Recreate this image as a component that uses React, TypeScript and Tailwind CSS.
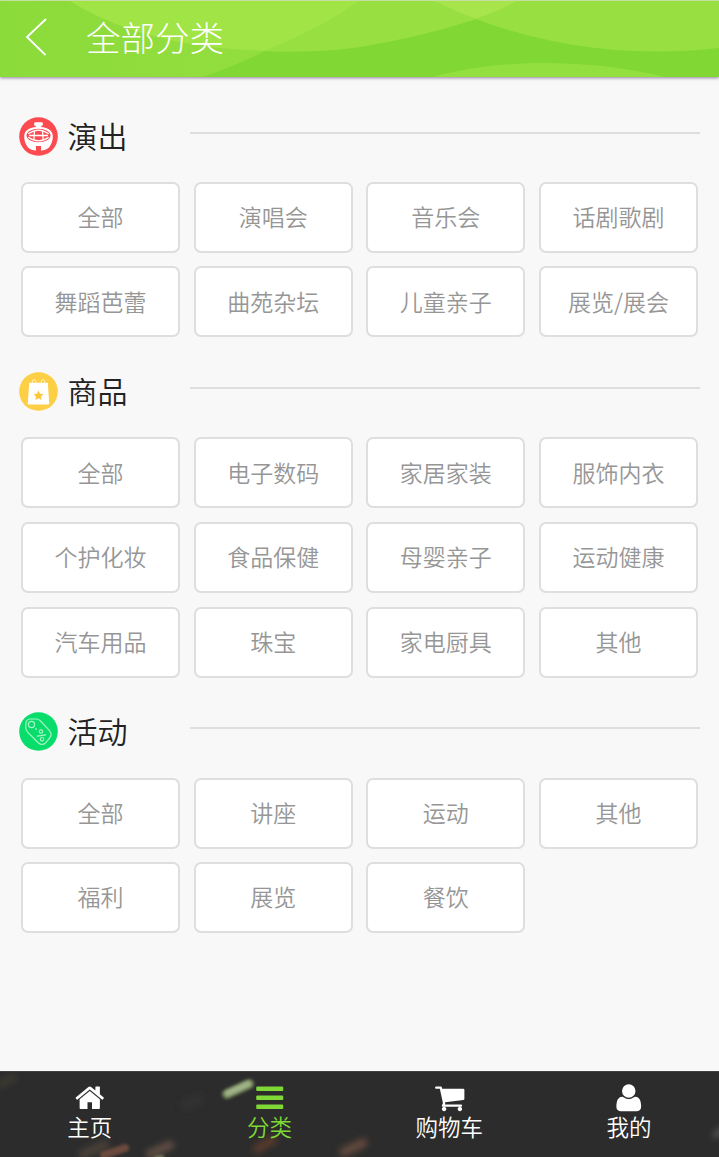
import type { ReactNode } from 'react';

// ============================================================
// Category Page: all categories with bottom tab bar
// ============================================================

interface Section {
  title: string;
  icon: ReactNode;
  items: string[];
}

function ShowIcon() {
  return (
    <svg viewBox="0 0 39 39" className="w-[39px] h-[39px] shrink-0">
      <circle cx="19.5" cy="19.5" r="19.3" fill="#fb4b50" />
      <path d="M15.200 6.200q0-1 1-1h6.600q1 0 1 1v1.800q0 .8-.8.8h-.8v3h-5.400v-3h-.8q-.8 0-.8-.8z" fill="#fff" />
      <path
        d="M19.500 9.800c8.500 0 14 3.700 14.300 9 .2 4.700-1.400 8.700-3.800 11.700-2.200 2-5 2.800-8 3.200v-4.700h-5v4.700c-3-.4-5.800-1.200-8-3.200-2.400-3-4-7-3.800-11.700.3-5.300 5.800-9 14.300-9z"
        fill="#fff"
      />
      <ellipse cx="19.500" cy="18.500" rx="12" ry="6.700" fill="#fb4b50" />
      <path
        d="M9.300 16.800Q19.500 9.500 29.700 16.800M9.300 20.200Q19.500 27.500 29.700 20.200M10 18.500h19M15.500 13.500l-.7 10M23.500 13.500l.7 10"
        fill="none"
        stroke="#fff"
        strokeWidth="1.300"
      />
    </svg>
  );
}

function GoodsIcon() {
  return (
    <svg viewBox="0 0 39 39" className="w-[39px] h-[39px] shrink-0">
      <circle cx="19.5" cy="19.5" r="19.3" fill="#fdcf45" />
      <path
        d="M13.500 11.500v-2q0-2 1.600-2t1.600 2v2M22.300 11.500v-2q0-2 1.600-2t1.600 2v2"
        fill="none"
        stroke="#fff"
        strokeOpacity=".75"
        strokeWidth=".9"
      />
      <path d="M10.200 10.700h18.600l1.400 20.700q.1 1.100-1 1.100H9.800q-1.100 0-1-1.100z" fill="#fff" />
      <path
        d="M19.500 18.500l1.500 3.200 3.500.4-2.600 2.400.7 3.500-3.100-1.800-3.100 1.800.7-3.500-2.600-2.400 3.500-.4z"
        fill="#fbc63a"
      />
    </svg>
  );
}

function ActivityIcon() {
  return (
    <svg viewBox="0 0 39 39" className="w-[39px] h-[39px] shrink-0">
      <circle cx="19.5" cy="19.5" r="19.3" fill="#08dd6c" />
      <g fill="none" stroke="#a6f5c7" strokeWidth="1.200" strokeLinecap="round">
        <path d="M11 7h6.500q2.300.2 4 2L30.500 18.700q2.700 3.500.6 6.700l-4.300 5.300q-3.600 3.300-7.300.3L8.600 20.200q-1.600-1.900-1.800-4.200v-4.500Q7.200 7.300 11 7z" />
        <circle cx="12.500" cy="12.500" r="3.100" />
        <path d="M16.500 16.500l.9.900M18.300 24.200l8.400-1.400" />
        <circle cx="22" cy="19.500" r="1.700" />
        <circle cx="23" cy="27.200" r="1.700" />
      </g>
    </svg>
  );
}

const sections: Section[] = [
  {
    title: '演出',
    icon: <ShowIcon />,
    items: ['全部', '演唱会', '音乐会', '话剧歌剧', '舞蹈芭蕾', '曲苑杂坛', '儿童亲子', '展览/展会'],
  },
  {
    title: '商品',
    icon: <GoodsIcon />,
    items: [
      '全部', '电子数码', '家居家装', '服饰内衣',
      '个护化妆', '食品保健', '母婴亲子', '运动健康',
      '汽车用品', '珠宝', '家电厨具', '其他',
    ],
  },
  {
    title: '活动',
    icon: <ActivityIcon />,
    items: ['全部', '讲座', '运动', '其他', '福利', '展览', '餐饮'],
  },
];

const tabs = [
  {
    label: '主页',
    path: 'M1472 992v480q0 26-19 45t-45 19h-384v-384h-256v384h-384q-26 0-45-19t-19-45v-480q0-1 .5-3t.5-3l575-474 575 474q1 2 1 6zm223-69l-62 74q-8 9-21 11h-3q-13 0-21-7l-692-577-692 577q-12 8-24 7-13-2-21-11l-62-74q-8-10-7-23.5t11-21.5l719-599q32-26 76-26t76 26l244 204v-195q0-14 9-23t23-9h192q14 0 23 9t9 23v408l219 182q10 8 11 21.5t-7 23.5z',
  },
  {
    label: '分类',
    active: true,
    path: 'M1664 1344v128q0 26-19 45t-45 19h-1408q-26 0-45-19t-19-45v-128q0-26 19-45t45-19h1408q26 0 45 19t19 45zm0-512v128q0 26-19 45t-45 19h-1408q-26 0-45-19t-19-45v-128q0-26 19-45t45-19h1408q26 0 45 19t19 45zm0-512v128q0 26-19 45t-45 19h-1408q-26 0-45-19t-19-45v-128q0-26 19-45t45-19h1408q26 0 45 19t19 45z',
  },
  {
    label: '购物车',
    path: 'M704 1536q0 52-38 90t-90 38-90-38-38-90 38-90 90-38 90 38 38 90zm896 0q0 52-38 90t-90 38-90-38-38-90 38-90 90-38 90 38 38 90zm128-1088v512q0 24-16.5 42.5t-40.5 21.5l-1044 122q13 60 13 70 0 16-24 64h920q26 0 45 19t19 45-19 45-45 19h-1024q-26 0-45-19t-19-45q0-11 8-31.500t16-36 21.500-40 15.500-29.500l-177-823h-204q-26 0-45-19t-19-45 19-45 45-19h256q16 0 28.500 6.500t19.500 15.500 13 24.500 8 26 5.500 29.500 4.500 26h1201q26 0 45 19t19 45z',
  },
  {
    label: '我的',
    path: 'M1600 1405q0 120-73 189.500t-194 69.500h-874q-121 0-194-69.500t-73-189.500q0-53 3.500-103.500t14-109 26.500-108.500 43-97.500 62-81 85.500-53.500 111.500-20q9 0 42 21.500t74.500 48 108 48 133.500 21.500 133.500-21.500 108-48 74.500-48 42-21.500q61 0 111.500 20t85.500 53.500 62 81 43 97.500 26.500 108.500 14 109 3.500 103.500zm-320-893q0 159-112.500 271.500t-271.500 112.500-271.500-112.500-112.500-271.500 112.500-271.500 271.500-112.500 271.500 112.500 112.500 271.500z',
  },
];

function Header() {
  return (
    <header className="relative h-[77px] border-t border-[#c3dfa4] bg-[#8cdc3b] shadow-[0_1px_3px_rgba(60,30,80,0.55)]">
      <svg viewBox="0 0 719 76" preserveAspectRatio="none" className="absolute inset-0 w-full h-full">
        <defs>
          <linearGradient id="hill" x1="0" x2="1">
            <stop offset="0" stopColor="#8bdb3a" />
            <stop offset="1" stopColor="#93de3f" />
          </linearGradient>
        </defs>
        <path d="M0 0H70C115 28 175 47 265 50Q237 64 203 76H0z" fill="url(#hill)" />
        <path d="M203 76Q237 64 265 50Q315 52 360 46C410 35 450 27 476 17C540 43 600 52 719 46V76z" fill="#81d834" />
        <path d="M70 0C115 28 175 47 265 50Q318 29 360 0z" fill="#a1e446" />
        <path d="M360 0Q318 29 265 50Q315 52 360 46Q425 35 476 18Q455 10 434 0z" fill="#98e041" />
        <path d="M434 0Q455 10 476 18Q501 9 517 0z" fill="#a8e54c" />
        <path d="M517 0Q501 9 476 18C540 42 620 58 719 47V0z" fill="#98e041" />
        <path d="M433 76C500 57 590 58 665 76z" fill="#94df40" />
      </svg>
      <div className="relative flex items-center h-[72px]">
        <svg viewBox="0 0 22 38" className="w-[22px] h-[38px] ml-[24.500px]" fill="none" stroke="#fff" strokeWidth="1.800">
          <path d="M21 1L2 19l18.500 18" />
        </svg>
        <h1 className="ml-[39.500px] pb-[1px] text-[34.500px] leading-none font-light text-white">全部分类</h1>
      </div>
    </header>
  );
}

function TabBar() {
  return (
    <nav className="relative h-[86px] bg-[#2c2c2c] overflow-hidden border-t border-[#3c403e]">
      {/* Blurred confetti backdrop */}
      <svg viewBox="0 0 719 85" className="absolute inset-0 w-full h-full">
        <defs>
          <filter id="soft" x="-50%" y="-50%" width="200%" height="200%">
            <feGaussianBlur stdDeviation="1.500" />
          </filter>
          <filter id="haze" x="-50%" y="-100%" width="200%" height="300%">
            <feGaussianBlur stdDeviation="3" />
          </filter>
        </defs>
        <g filter="url(#haze)" strokeLinecap="round">
          <path d="M0 12L13 6" stroke="#3b3931" strokeWidth="8" />
          <path d="M83 82L105 73" stroke="#494037" strokeWidth="9" />
          <path d="M150 82L170 73" stroke="#625044" strokeWidth="8" />
          <path d="M185 33L200 27" stroke="#313331" strokeWidth="10" />
          <path d="M257 77L273 68" stroke="#5b3b2c" strokeWidth="8" />
          <path d="M344 80L363 71" stroke="#654a3d" strokeWidth="9" />
          <path d="M716 63L722 58" stroke="#555" strokeWidth="6" />
        </g>
        <g filter="url(#soft)" strokeLinecap="round">
          <path d="M104 83L125 76" stroke="#6c4a3c" strokeWidth="8" />
          <path d="M156 86L162 85" stroke="#777c57" strokeWidth="4" />
          <path d="M227 22L249 12" stroke="#6e8356" strokeWidth="10" />
          <path d="M228 21L248 12" stroke="#a0b287" strokeWidth="6" />
        </g>
      </svg>
      <div className="relative grid grid-cols-4 h-full">
        {tabs.map((tab) => (
          <a
            key={tab.label}
            className={`flex flex-col items-center pt-[10px] ${tab.active ? 'text-[#7fd835]' : 'text-white'}`}
          >
            <svg viewBox="0 0 1792 1792" className="w-[31.500px] h-[31.500px]" fill="currentColor">
              <path d={tab.path} />
            </svg>
            <span className="text-[22.500px] leading-[24px] font-[350]">{tab.label}</span>
          </a>
        ))}
      </div>
    </nav>
  );
}

export default function App() {
  return (
    <div className="flex flex-col h-[1157px] bg-[#f8f8f8] font-['Noto_Sans_CJK_SC',sans-serif]">
      <Header />

      <main className="flex-1 pt-[39.600px]">
        {sections.map((section) => (
          <section key={section.title} className="pb-[34.700px]">
            {/* Section heading */}
            <div className="flex items-start h-[65.300px] px-[19px]">
              {section.icon}
              <h2 className="ml-[9.500px] w-[122.500px] text-[30px] leading-[36px] font-[350] text-[#222]">{section.title}</h2>
              <div className="mt-[15px] h-[2px] flex-1 bg-[#dedede]" />
            </div>

            {/* Category tiles */}
            <div className="grid grid-cols-4 gap-x-[13.500px] gap-y-[13.600px] mx-[21px]">
              {section.items.map((item) => (
                <button
                  key={item}
                  className="h-[71px] pb-[2px] rounded-[7px] border-2 border-[#dedede] bg-white text-[23px] font-[350] text-[#969696]"
                >
                  {item}
                </button>
              ))}
            </div>
          </section>
        ))}
      </main>

      <TabBar />
    </div>
  );
}
